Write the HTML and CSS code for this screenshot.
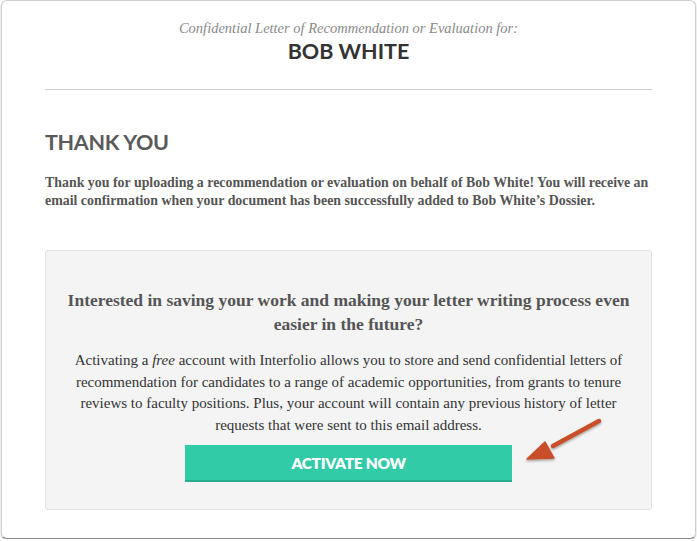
FILE: index.html
```html
<!DOCTYPE html>
<html>
<head>
<meta charset="utf-8">
<link rel="stylesheet" href="styles.css">
</head>
<body>
<div class="frame">
  <header class="head">
    <p class="sub">Confidential Letter of Recommendation or Evaluation for:</p>
    <h1 class="name">BOB WHITE</h1>
  </header>
  <hr class="divider">
  <section class="thanks">
    <h2 class="title">THANK YOU</h2>
    <p class="msg">Thank you for uploading a recommendation or evaluation on behalf of Bob White! You will receive an email confirmation when your document has been successfully added to Bob White’s Dossier.</p>
  </section>
  <section class="promo">
    <h3 class="promo-title">Interested in saving your work and making your letter writing process even easier in the future?</h3>
    <p class="promo-text">Activating a <em>free</em> account with Interfolio allows you to store and send confidential letters of recommendation for candidates to a range of academic opportunities, from grants to tenure reviews to faculty positions. Plus, your account will contain any previous history of letter requests that were sent to this email address.</p>
    <div class="actions">
      <a class="btn">ACTIVATE NOW</a>
    </div>
  </section>
  <svg class="arrow" width="90" height="60" viewBox="0 0 90 60">
    <defs>
      <filter id="sh" x="-20%" y="-20%" width="140%" height="150%">
        <feDropShadow dx="0" dy="1.5" stdDeviation="1.2" flood-color="#000" flood-opacity="0.35"/>
      </filter>
    </defs>
    <g filter="url(#sh)" fill="#c8502a" stroke="#c8502a">
      <line x1="76" y1="9" x2="30" y2="34" stroke-width="4.5" stroke-linecap="round"/>
      <polygon points="4,47 22,30 31,46" stroke-width="1.5" stroke-linejoin="round"/>
    </g>
  </svg>
</div>
</body>
</html>
```
FILE: styles.css
```css
html, body {
  margin: 0;
  padding: 0;
  background: #fff;
}
.frame {
  position: relative;
  box-sizing: border-box;
  width: 695px;
  height: 539px;
  margin-left: 1px;
  border: 1px solid #cfcfcf;
  border-bottom: 1px solid #8a8a8a;
  border-radius: 6px;
  box-shadow: 0 1px 2px rgba(0,0,0,0.25);
  padding: 0 43px;
  background: #fff;
}
.head {
  text-align: center;
  padding-top: 18px;
}
.sub {
  margin: 0;
  font-family: "Liberation Serif", serif;
  font-style: italic;
  font-size: 14.5px;
  line-height: 18px;
  color: #8a8a8a;
}
.name {
  margin: 0;
  font-family: Lato, sans-serif;
  font-weight: 700;
  font-size: 21.5px;
  line-height: 28px;
  color: #333;
}
.divider {
  border: 0;
  border-top: 1px solid #cfcfcf;
  margin: 24px 0 0;
}
.thanks {
  padding-top: 40px;
}
.title {
  margin: 0;
  font-family: Lato, sans-serif;
  font-weight: 700;
  font-size: 21.5px;
  line-height: 24px;
  color: #5a5a5a;
  letter-spacing: -0.3px;
}
.msg {
  margin: 20px 0 0;
  font-family: "Liberation Serif", serif;
  font-weight: 700;
  font-size: 13.9px;
  line-height: 18px;
  color: #555;
}
.promo {
  margin-top: 40px;
  background: #f4f4f4;
  border: 1px solid #e2e2e2;
  border-radius: 3px;
  padding: 37px 20px 27px;
  text-align: center;
}
.promo-title {
  margin: 0;
  font-family: "Liberation Serif", serif;
  font-weight: 700;
  font-size: 17.5px;
  line-height: 24px;
  color: #555;
}
.promo-text {
  margin: 14px 0 0;
  font-family: "Liberation Serif", serif;
  font-size: 15px;
  line-height: 21.7px;
  color: #333;
}
.promo-text em {
  font-style: italic;
}
.actions {
  display: flex;
  justify-content: center;
  margin-top: 8px;
}
.btn {
  display: block;
  box-sizing: border-box;
  width: 327px;
  height: 37px;
  background: #32cba8;
  border-bottom: 2px solid #27ad8d;
  color: #fff;
  font-family: Lato, sans-serif;
  font-weight: 800;
  font-size: 15.5px;
  line-height: 36px;
  letter-spacing: -0.3px;
}
.arrow {
  position: absolute;
  left: 521px;
  top: 411px;
}
```
